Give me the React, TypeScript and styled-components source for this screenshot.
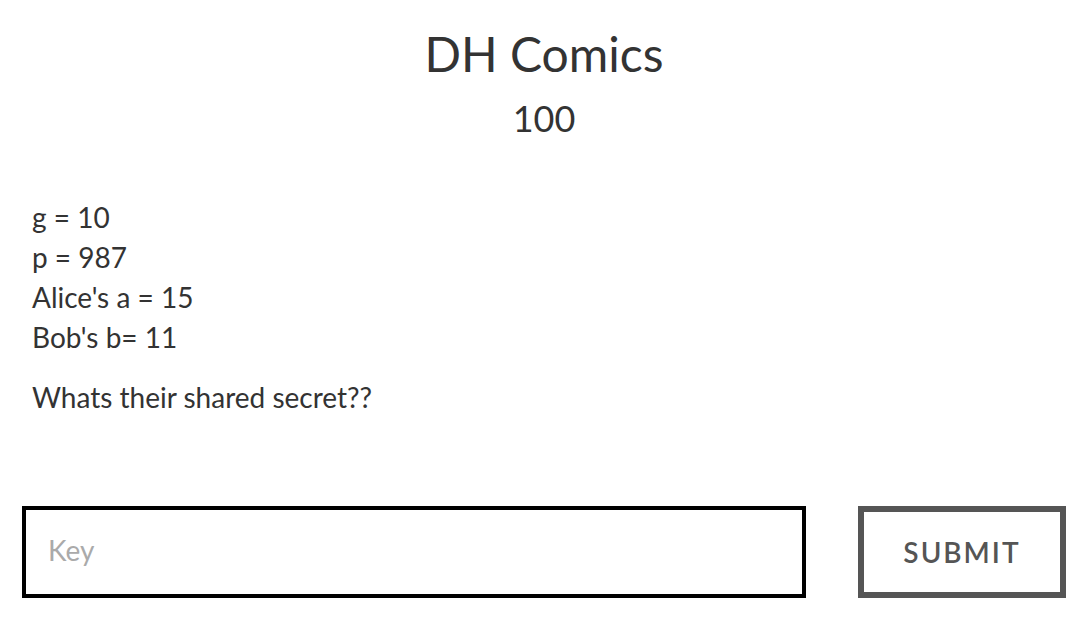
import React from "react";
import styled, { createGlobalStyle } from "styled-components";

const GlobalStyle = createGlobalStyle`
  * { box-sizing: border-box; }
  body {
    margin: 0;
    background: #fff;
    color: #333;
    font-family: Lato, "Liberation Sans", sans-serif;
    text-rendering: optimizeLegibility;
  }
`;

const Challenge = styled.main`
  padding: 24px 24px 28px 22px;
`;

const Header = styled.header`
  text-align: center;
`;

const Title = styled.h1`
  margin: 0;
  font-size: 48px;
  font-weight: 400;
  line-height: 60px;
`;

const Points = styled.h2`
  margin: 12px 0 0;
  font-size: 36px;
  font-weight: 400;
  line-height: 44px;
`;

const Description = styled.section`
  margin-top: 57px;
  padding: 0 10px;
  font-size: 28px;
  line-height: 40px;
`;

const Paragraph = styled.p`
  margin: 0 0 20px;
`;

const AnswerForm = styled.form`
  display: flex;
  gap: 52px;
  margin-top: 89px;
`;

const KeyInput = styled.input`
  flex: 1;
  min-width: 0;
  height: 92px;
  padding: 0 22px 4px;
  border: 4px solid #000;
  border-radius: 0;
  outline: 0;
  background: #fff;
  color: #333;
  font: inherit;
  font-size: 28px;
  &::placeholder {
    color: #aaa;
    opacity: 1;
  }
`;

const SubmitButton = styled.button`
  height: 92px;
  min-width: 208px;
  padding: 0 32px;
  border: 6px solid #555;
  background: #fff;
  color: #555;
  font: inherit;
  font-size: 28px;
  font-weight: 600;
  letter-spacing: 2px;
  text-transform: uppercase;
`;

export default function App() {
  return (
    <>
      <GlobalStyle />
      <Challenge>
        <Header>
          <Title>DH Comics</Title>
          <Points>100</Points>
        </Header>
        <Description>
          <Paragraph>
            g = 10<br />
            p = 987<br />
            Alice's a = 15<br />
            Bob's b= 11
          </Paragraph>
          <Paragraph>Whats their shared secret??</Paragraph>
        </Description>
        <AnswerForm onSubmit={(event) => event.preventDefault()}>
          <KeyInput type="text" name="key" placeholder="Key" aria-label="Key" />
          <SubmitButton type="submit">Submit</SubmitButton>
        </AnswerForm>
      </Challenge>
    </>
  );
}
